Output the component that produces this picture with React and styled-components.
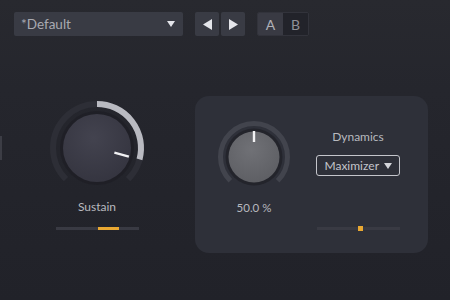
import styled, { createGlobalStyle } from "styled-components";

const GlobalStyle = createGlobalStyle`
  html, body {
    margin: 0;
    padding: 0;
    width: 450px;
    height: 300px;
    overflow: hidden;
    background: #22232a;
  }
  * { box-sizing: border-box; }
`

const Page = styled.div`
  width: 450px;
  height: 300px;
  background: linear-gradient(180deg, #28292f 0%, #25262d 30%, #212229 100%);
  font-family: Lato, "Open Sans", sans-serif;
  color: #b9bac1;
  position: relative;
  overflow: hidden;
`

const TopBar = styled.div`
  display: flex;
  align-items: center;
  padding: 12px 0 0 14px;
  height: 36px;
`

const PresetSelect = styled.div`
  width: 169px;
  height: 24px;
  background: #393b44;
  border-radius: 2px;
  display: flex;
  align-items: center;
  justify-content: space-between;
  padding: 0 8px 0 7px;
  font-size: 13.5px;
  color: #a9aab1;
`

const NavGroup = styled.div`
  display: flex;
  gap: 2px;
  margin-left: 12px;
`

const NavButton = styled.div`
  width: 24px;
  height: 24px;
  background: #393b44;
  border-radius: 2px;
  display: flex;
  align-items: center;
  justify-content: center;
`

const ABGroup = styled.div`
  display: flex;
  margin-left: 12px;
  border: 1px solid #32333b;
  border-radius: 2px;
  overflow: hidden;
`

const ABButton = styled.div`
  width: 25px;
  height: 22px;
  display: flex;
  align-items: center;
  justify-content: center;
  font-size: 14px;
  background: ${(p) => (p.$active ? "#393a43" : "#22232a")};
  color: ${(p) => (p.$active ? "#b0b1b8" : "#8f9098")};
`

const Main = styled.div`
  display: flex;
  margin-top: 60px;
`

const LeftColumn = styled.div`
  width: 194px;
  display: flex;
  flex-direction: column;
  align-items: center;
  padding-top: 2px;
`

const Panel = styled.div`
  width: 233px;
  height: 157px;
  margin-left: 1px;
  background: #2e3039;
  border-radius: 14px;
  display: grid;
  grid-template-columns: 118px 90px;
`

const KnobColumn = styled.div`
  display: flex;
  flex-direction: column;
  align-items: center;
  padding-top: ${(p) => p.$top}px;
`

const Label = styled.div`
  font-size: ${(p) => p.$size || 12}px;
  line-height: 16px;
  color: #b8b9bf;
  margin-top: ${(p) => p.$mt || 0}px;
`

const SideColumn = styled.div`
  display: flex;
  flex-direction: column;
  align-items: center;
  padding-top: 33px;
`

const ModeSelect = styled.div`
  margin-top: 10px;
  width: 84px;
  height: 21px;
  border: 1.5px solid #c4c5cb;
  border-radius: 3px;
  display: flex;
  align-items: center;
  justify-content: flex-end;
  gap: 5px;
  padding-right: 7px;
  font-size: 12px;
  color: #c4c5cb;
`

const Slider = styled.div`
  position: relative;
  width: 83px;
  height: 3px;
  background: #393a43;
  margin-top: ${(p) => p.$mt}px;
`

const SliderFill = styled.div`
  position: absolute;
  top: ${(p) => (p.$dot ? -1 : 0)}px;
  height: ${(p) => (p.$dot ? 5 : 3)}px;
  background: #e9a832;
`

const EdgeSliver = styled.div`
  position: absolute;
  left: 0;
  top: 136px;
  width: 2px;
  height: 24px;
  background: #3c3d45;
`

function polar(cx, cy, r, deg) {
  const a = ((deg - 90) * Math.PI) / 180;
  return [cx + r * Math.cos(a), cy + r * Math.sin(a)];
}

function arc(cx, cy, r, from, to) {
  const [x1, y1] = polar(cx, cy, r, from);
  const [x2, y2] = polar(cx, cy, r, to);
  const large = to - from > 180 ? 1 : 0;
  return `M ${x1} ${y1} A ${r} ${r} 0 ${large} 1 ${x2} ${y2}`;
}

function Knob({ size, ringR, ringW, bodyR, value, body, track, id, pointer }) {
  const c = size / 2;
  const start = -135;
  const end = 135;
  const v = start + (end - start) * value;
  const [px1, py1] = polar(c, c, pointer[0], v);
  const [px2, py2] = polar(c, c, pointer[1], v);
  return (
    <svg width={size} height={size} viewBox={`0 0 ${size} ${size}`}>
      <defs>
        <radialGradient id={id} cx="45%" cy="35%" r="70%">
          <stop offset="0%" stopColor={body[0]} />
          <stop offset="100%" stopColor={body[1]} />
        </radialGradient>
      </defs>
      <path d={arc(c, c, ringR, start, end)} stroke={track} strokeWidth={ringW} fill="none" />
      {v > 0 && <path d={arc(c, c, ringR, 0, v)} stroke="#b9bac1" strokeWidth={ringW} fill="none" />}
      {v < 0 && <path d={arc(c, c, ringR, v, 0)} stroke="#b9bac1" strokeWidth={ringW} fill="none" />}
      <circle cx={c} cy={c} r={bodyR + 3} fill="#1c1d23" opacity="0.6" />
      <circle cx={c} cy={c} r={bodyR} fill={`url(#${id})`} />
      <line x1={px1} y1={py1} x2={px2} y2={py2} stroke="#f2f2f4" strokeWidth="2.4" />
    </svg>
  );
}

function Triangle({ dir, size = 8, color = "#d8d9de" }) {
  const pts = {
    down: `0,1 ${size},1 ${size / 2},${size - 1}`,
    left: `${size - 1},0 ${size - 1},${size} 1,${size / 2}`,
    right: `1,0 1,${size} ${size - 1},${size / 2}`,
  }[dir];
  return (
    <svg width={size} height={size} viewBox={`0 0 ${size} ${size}`}>
      <polygon points={pts} fill={color} />
    </svg>
  );
}

export default function App() {
  return (
    <>
      <GlobalStyle />
      <Page>
        <EdgeSliver />
        <TopBar>
          <PresetSelect>
            <span>*Default</span>
            <Triangle dir="down" size={8} color="#e4e5ea" />
          </PresetSelect>
          <NavGroup>
            <NavButton><Triangle dir="left" size={11} color="#e4e5ea" /></NavButton>
            <NavButton><Triangle dir="right" size={11} color="#e4e5ea" /></NavButton>
          </NavGroup>
          <ABGroup>
            <ABButton $active>A</ABButton>
            <ABButton>B</ABButton>
          </ABGroup>
        </TopBar>
        <Main>
          <LeftColumn>
            <Knob
              id="sustain"
              size={100}
              ringR={44}
              ringW={6}
              bodyR={34}
              value={(105 + 135) / 270}
              body={["#43434f", "#34343f"]}
              track="#2d2e36"
              pointer={[18, 33]}
            />
            <Label $size={12} $mt={1}>Sustain</Label>
            <Slider $mt={12}>
              <SliderFill style={{ left: 42, width: 21 }} />
            </Slider>
          </LeftColumn>
          <Panel>
            <KnobColumn $top={21}>
              <Knob
                id="mix"
                size={80}
                ringR={33.5}
                ringW={5}
                bodyR={25.5}
                value={0.5}
                body={["#707176", "#5d5e63"]}
                track="#42444d"
                pointer={[15, 26]}
              />
              <Label $size={11.5} $mt={3}>50.0 %</Label>
            </KnobColumn>
            <SideColumn>
              <Label>Dynamics</Label>
              <ModeSelect>
                <span>Maximizer</span>
                <Triangle dir="down" size={8} color="#d4d5da" />
              </ModeSelect>
              <Slider $mt={51}>
                <SliderFill $dot style={{ left: 41, width: 5 }} />
              </Slider>
            </SideColumn>
          </Panel>
        </Main>
      </Page>
    </>
  );
}
